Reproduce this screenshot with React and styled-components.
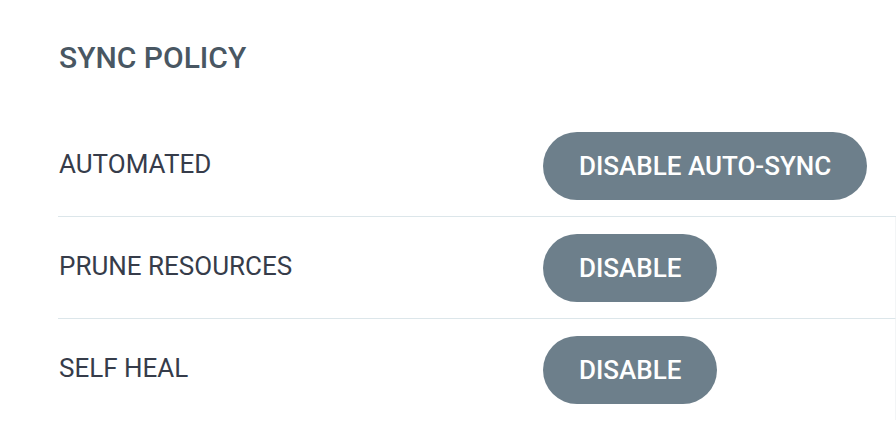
import React from "react";
import styled, { createGlobalStyle } from "styled-components";

const Global = createGlobalStyle`
  html, body { margin: 0; padding: 0; background: #fff; }
  body { font-family: Roboto, "Liberation Sans", sans-serif; }
`;

const Page = styled.div`
  width: 896px;
  height: 446px;
  overflow: hidden;
  padding: 38px 0 0 58px;
  box-sizing: border-box;
`;

const Title = styled.h2`
  margin: 0 0 37px 1px;
  font-size: 30px;
  font-weight: 500;
  line-height: 40px;
  color: #495763;
`;

const Row = styled.div`
  display: grid;
  grid-template-columns: 485px 1fr;
  align-items: center;
  padding: 17px 0 16px;
  border-bottom: ${(p) => (p.$last ? "none" : "1px solid #dce6ea")};
  border-right: ${(p) => (p.$edge ? "1px solid #f3f5f6" : "none")};
`;

const Label = styled.div`
  font-size: 26px;
  font-weight: 400;
  color: #363c4a;
  padding-left: 1px;
  margin-top: -5px;
`;

const Button = styled.button`
  justify-self: start;
  height: 68px;
  padding: 0 36px;
  border: none;
  border-radius: 34px;
  background: #6d7f8b;
  color: #fff;
  font-family: Roboto, "Liberation Sans", sans-serif;
  font-size: 26px;
  font-weight: 500;
  cursor: pointer;
`;

const rows = [
  { label: "AUTOMATED", action: "DISABLE AUTO-SYNC" },
  { label: "PRUNE RESOURCES", action: "DISABLE" },
  { label: "SELF HEAL", action: "DISABLE" },
];

export default function App() {
  return (
    <>
      <Global />
      <Page>
        <Title>SYNC POLICY</Title>
        {rows.map((r, i) => (
          <Row key={r.label} $last={i === rows.length - 1} $edge={i > 0}>
            <Label>{r.label}</Label>
            <Button>{r.action}</Button>
          </Row>
        ))}
      </Page>
    </>
  );
}
